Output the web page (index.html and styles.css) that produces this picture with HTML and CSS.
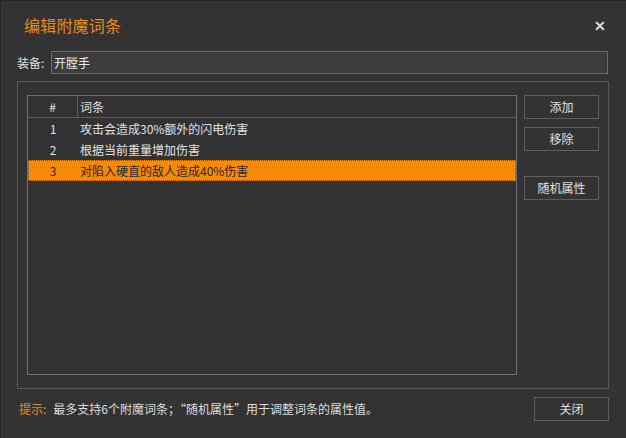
FILE: index.html
```html
<!DOCTYPE html>
<html>
<head>
<meta charset="utf-8">
<link rel="stylesheet" href="styles.css">
</head>
<body>
<div class="window">
  <div class="titlebar">
    <div class="title">编辑附魔词条</div>
    <div class="close">✕</div>
  </div>
  <div class="equip">
    <span class="label">装备:</span>
    <div class="input">开膛手</div>
  </div>
  <div class="group">
    <div class="list">
      <div class="row head">
        <div class="c-num">#</div>
        <div class="c-text">词条</div>
      </div>
      <div class="row">
        <div class="c-num">1</div>
        <div class="c-text">攻击会造成30%额外的闪电伤害</div>
      </div>
      <div class="row">
        <div class="c-num">2</div>
        <div class="c-text">根据当前重量增加伤害</div>
      </div>
      <div class="row sel">
        <div class="c-num">3</div>
        <div class="c-text">对陷入硬直的敌人造成40%伤害</div>
      </div>
    </div>
    <div class="side">
      <div class="btn">添加</div>
      <div class="btn">移除</div>
      <div class="btn gap">随机属性</div>
    </div>
  </div>
  <div class="footer">
    <div class="hint"><span class="hint-label">提示:</span>最多支持6个附魔词条；“随机属性”用于调整词条的属性值。</div>
    <div class="btn close-btn">关闭</div>
  </div>
</div>
</body>
</html>
```
FILE: styles.css
```css
* { box-sizing: border-box; }
html, body {
  margin: 0;
  padding: 0;
  width: 626px;
  height: 438px;
  overflow: hidden;
  background: #333333;
}
body {
  font-family: "Noto Sans CJK SC", "Noto Sans", sans-serif;
  font-size: 12px;
  color: #e2e2e2;
}
.window {
  width: 626px;
  height: 438px;
  border-left: 1px solid #262626;
  border-top: 1px solid #262626;
  background: #333333;
  display: flex;
  flex-direction: column;
}
.titlebar {
  height: 48px;
  display: flex;
  align-items: center;
  justify-content: space-between;
  padding: 0 20px 0 23px;
}
.title {
  font-size: 16px;
  color: #e8891c;
  letter-spacing: 0.2px;
}
.close {
  font-size: 14px;
  color: #dddddd;
  font-weight: bold;
}
.equip {
  display: flex;
  align-items: center;
  padding-left: 16px;
  height: 24px;
  margin-top: 1px;
}
.label {
  width: 34px;
  color: #dedede;
}
.input {
  width: 557px;
  height: 23px;
  border: 1px solid #6b6b6b;
  background: #3d3d3d;
  padding-left: 2px;
  line-height: 21px;
  color: #ececec;
}
.group {
  margin: 7px 0 0 16px;
  width: 592px;
  height: 308px;
  border: 1px solid #595959;
  display: flex;
  padding: 13px 0 0 9px;
}
.list {
  width: 490px;
  height: 280px;
  border: 1px solid #6e6e6e;
  background: #323232;
}
.row {
  display: flex;
  height: 21px;
  line-height: 21px;
}
.row.head {
  height: 22px;
  line-height: 21px;
  border-bottom: 1px solid #5a5a5a;
}
.row.head .c-num {
  border-right: 1px solid #5a5a5a;
}
.c-num {
  width: 50px;
  text-align: center;
}
.c-text {
  padding-left: 2px;
}
.row.sel {
  background: #f5890a;
  color: #2a2a2a;
  outline: 1px dotted #6a4a1a;
  outline-offset: -1px;
}
.side {
  margin-left: 7px;
  display: flex;
  flex-direction: column;
}
.btn {
  width: 75px;
  height: 24px;
  border: 1px solid #5e5e5e;
  text-align: center;
  line-height: 22px;
  color: #e0e0e0;
  margin-bottom: 8px;
}
.btn.gap {
  margin-top: 17px;
}
.footer {
  display: flex;
  align-items: center;
  justify-content: space-between;
  padding: 0 17px 0 18px;
  margin-top: 7px;
  height: 25px;
}
.hint-label {
  color: #e8891c;
  margin-right: 7px;
}
.hint {
  color: #dedede;
}
.close-btn {
  margin: 0;
}
```
